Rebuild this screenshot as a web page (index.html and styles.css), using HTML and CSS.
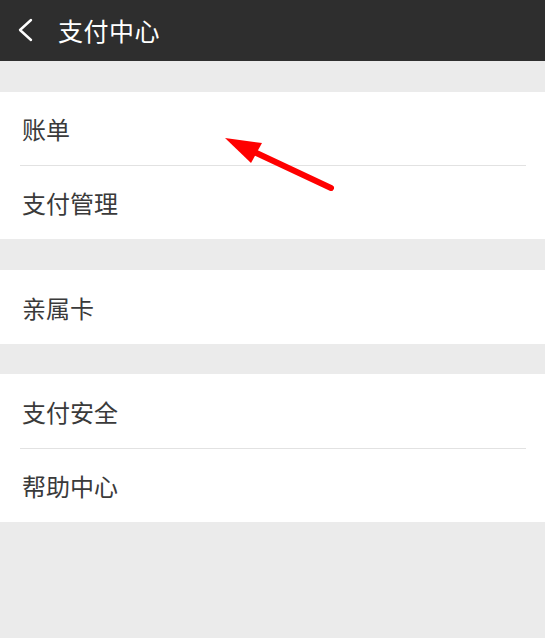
FILE: index.html
```html
<!DOCTYPE html>
<html lang="zh">
<head>
<meta charset="utf-8">
<link rel="stylesheet" href="styles.css">
</head>
<body>
<div class="app">
  <header class="topbar">
    <svg class="back" width="20" height="24" viewBox="0 0 20 24"><polyline points="15,2 4,12 15,22" fill="none" stroke="#fff" stroke-width="2.4" stroke-linecap="round" stroke-linejoin="round"/></svg>
    <span class="title">支付中心</span>
  </header>
  <section class="group g1">
    <div class="row first">账单</div>
    <div class="row">支付管理</div>
  </section>
  <section class="group g2">
    <div class="row">亲属卡</div>
  </section>
  <section class="group g3">
    <div class="row">支付安全</div>
    <div class="row">帮助中心</div>
  </section>
  <svg class="arrow" width="545" height="638" viewBox="0 0 545 638">
    <line x1="331" y1="188" x2="250" y2="150" stroke="#f00" stroke-width="6" stroke-linecap="round"/>
    <polygon points="225,138 262,143 251,163" fill="#f00"/>
  </svg>
</div>
</body>
</html>
```
FILE: styles.css
```css
html, body {
  margin: 0;
  padding: 0;
  background: #ebebeb;
}
body {
  font-family: "Noto Sans CJK SC", "Noto Sans", sans-serif;
  width: 545px;
  height: 638px;
  overflow: hidden;
}
.app {
  position: relative;
  width: 545px;
  height: 638px;
}
.topbar {
  height: 61px;
  background: #2e2e2e;
  display: flex;
  align-items: center;
  padding-left: 16px;
  box-sizing: border-box;
}
.back {
  margin-top: -1px;
}
.title {
  color: #fff;
  font-size: 25px;
  letter-spacing: 0.5px;
  margin-left: 22px;
  margin-top: -2px;
}
.group {
  background: #fff;
  margin-top: 31px;
}
.g3 {
  margin-top: 30px;
}
.row {
  height: 74px;
  display: flex;
  align-items: center;
  padding-left: 22px;
  font-size: 24px;
  color: #3a3a3a;
  box-sizing: border-box;
}
.row.first {
  height: 73px;
}
.row + .row {
  border-top: 1px solid #e2e2e2;
  margin-left: 20px;
  margin-right: 19px;
  padding-left: 2px;
}
.arrow {
  position: absolute;
  left: 0;
  top: 0;
  pointer-events: none;
}
```
